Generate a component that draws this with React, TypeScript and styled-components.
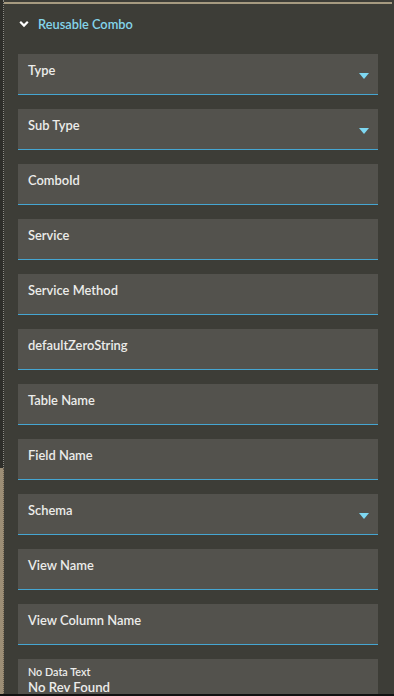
import React from "react";
import styled, { createGlobalStyle } from "styled-components";

const Global = createGlobalStyle`
  html, body { margin: 0; padding: 0; background: #3d3d37; }
  * { box-sizing: border-box; }
`;

const Page = styled.div`
  width: 394px;
  height: 696px;
  overflow: hidden;
  display: flex;
  background: #3d3d37;
  font-family: Lato, "Noto Sans", sans-serif;
  border-bottom: 2px solid #111;
`;

const Rail = styled.div`
  width: 4px;
  display: flex;
  flex-direction: column;
  flex-shrink: 0;
`;

const RailSegment = styled.div<{ $tan?: boolean; $h?: number }>`
  background: ${(p) => (p.$tan ? "#9c8e76" : "#2e2e2a")};
  border-right: 1px dotted ${(p) => (p.$tan ? "#6a604f" : "#8c8c86")};
  ${(p) => (p.$h ? `height: ${p.$h}px; flex-shrink: 0;` : "flex: 1;")}
`;

const Panel = styled.div`
  flex: 1;
  display: flex;
  flex-direction: column;
  padding: 2px 2px 0 0;
`;

const TopLine = styled.div`
  height: 2px;
  background: #a69a80;
  flex-shrink: 0;
`;

const Body = styled.div`
  padding: 0 14px 0 14px;
  display: flex;
  flex-direction: column;
`;

const Header = styled.div`
  height: 39px;
  padding-top: 1px;
  display: flex;
  align-items: center;
  gap: 9px;
  padding-left: 1px;
  color: #84d5ea;
  font-size: 12.8px;
  font-weight: 600;
`;

const FieldList = styled.div`
  display: flex;
  flex-direction: column;
  gap: 14px;
  margin-top: 11px;
`;

const Field = styled.div<{ $compact?: boolean }>`
  position: relative;
  height: 41px;
  background: #53524d;
  border-bottom: 1px solid #45a6d2;
  padding: ${(p) => (p.$compact ? "6px 10px 0" : "8px 10px 0")};
  display: flex;
  flex-direction: column;
`;

const Label = styled.span`
  color: #ececea;
  font-size: 12.9px;
  font-weight: 600;
  line-height: 16px;
`;

const SmallLabel = styled.span`
  color: #ececea;
  font-size: 10.8px;
  font-weight: 600;
  line-height: 13px;
`;

const Value = styled.span`
  color: #ececea;
  font-size: 13.2px;
  font-weight: 600;
  line-height: 18px;
`;

const Caret = styled.div`
  position: absolute;
  right: 9px;
  top: 19px;
  width: 0;
  height: 0;
  border-left: 5px solid transparent;
  border-right: 5px solid transparent;
  border-top: 6px solid #7ed8f2;
`;

const fields: { label: string; dropdown?: boolean }[] = [
  { label: "Type", dropdown: true },
  { label: "Sub Type", dropdown: true },
  { label: "ComboId" },
  { label: "Service" },
  { label: "Service Method" },
  { label: "defaultZeroString" },
  { label: "Table Name" },
  { label: "Field Name" },
  { label: "Schema", dropdown: true },
  { label: "View Name" },
  { label: "View Column Name" },
];

export default function App() {
  return (
    <>
      <Global />
      <Page>
        <Rail>
          <RailSegment $h={468} />
          <RailSegment $tan />
        </Rail>
        <Panel>
          <TopLine />
          <Body>
            <Header>
              <svg width="10" height="8" viewBox="0 0 10 8">
                <polyline points="1.2,1.8 5,5.6 8.8,1.8" fill="none" stroke="#ffffff" strokeWidth="2.2" />
              </svg>
              <span>Reusable Combo</span>
            </Header>
            <FieldList>
              {fields.map((f) => (
                <Field key={f.label}>
                  <Label>{f.label}</Label>
                  {f.dropdown && <Caret />}
                </Field>
              ))}
              <Field $compact>
                <SmallLabel>No Data Text</SmallLabel>
                <Value>No Rev Found</Value>
              </Field>
            </FieldList>
          </Body>
        </Panel>
      </Page>
    </>
  );
}
